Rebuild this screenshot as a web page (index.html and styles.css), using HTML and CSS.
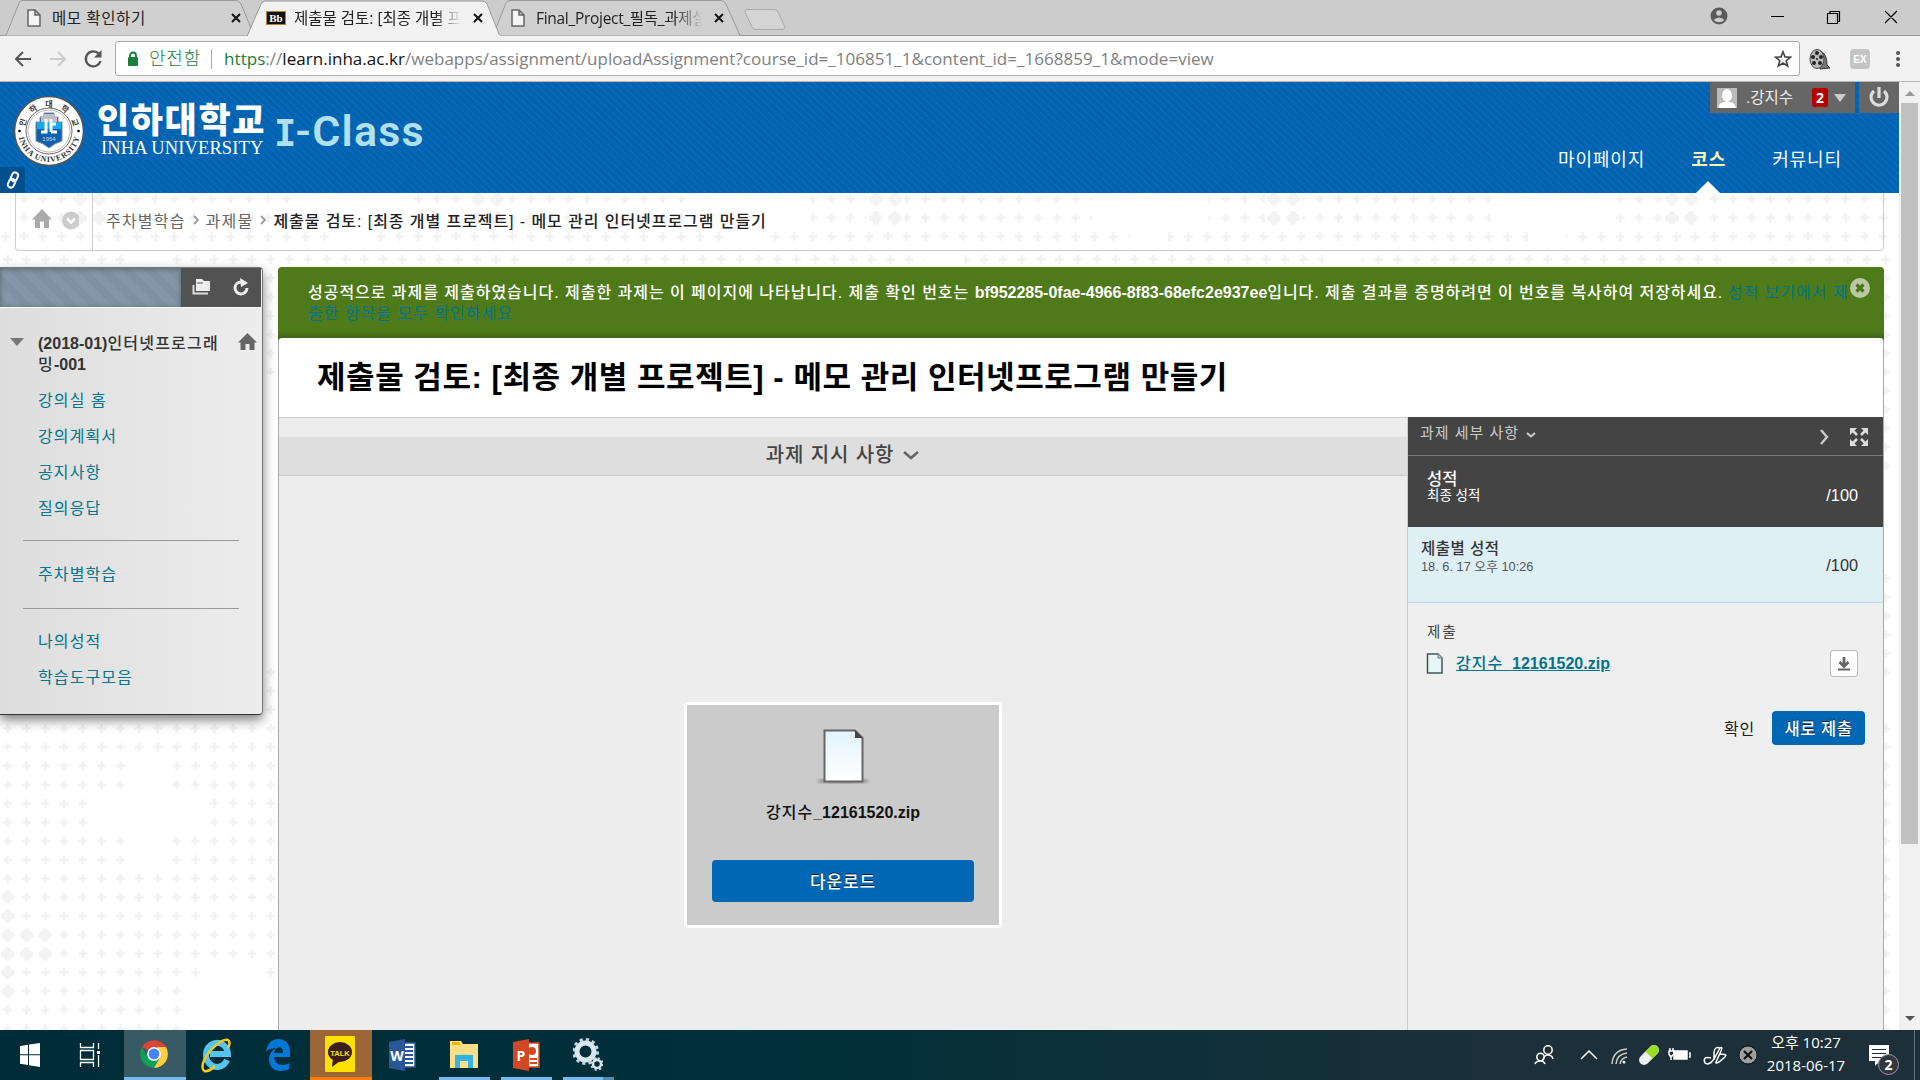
FILE: index.html
```html
<!DOCTYPE html>
<html lang="ko">
<head>
<meta charset="utf-8">
<title>제출물 검토</title>
<link rel="stylesheet" href="styles.css">
</head>
<body>
<header class="tabs">
  <svg class="tab-shapes" width="1920" height="36" viewBox="0 0 1920 36">
    <rect width="1920" height="36" fill="#ccc"/>
    <path d="M0 35.5H1920" stroke="#999" />
    <path d="M6 35.500L19 3Q20 .5 23 .5H236Q239 .5 241 4L254 35.500" fill="#d0d0d0" stroke="#999"/>
    <path d="M493 35.500L506 3Q507 .5 510 .5H721Q724 .5 726 4L740 35.500" fill="#d0d0d0" stroke="#999"/>
    <path d="M247 36.500L261 4Q262 1 265 1H482Q485 1 487 4L500 36.500" fill="#f2f2f2" stroke="#999"/>
    <path d="M248 36H500" stroke="#f2f2f2" stroke-width="2"/>
    <path d="M747 9.500H774Q777 9.500 778 12L785 27Q785 29.500 783 29.500H756Q753 29.500 752 27L745 12Q744.500 9.500 747 9.500Z" fill="#d4d4d4" stroke="#aaa"/>
  </svg>
  <div class="tab t1"><svg width="14" height="18" viewBox="0 0 14 18"><path d="M1 1H8L13 6V17H1ZM8 1V6H13" fill="#f4f4f4" stroke="#666" stroke-width="1.500"/></svg><span>메모 확인하기</span><svg class="x" width="10" height="10"><path d="M1 1L9 9M9 1L1 9" stroke="#111" stroke-width="2"/></svg></div>
  <div class="tab t2"><b class="bb">Bb</b><span>제출물 검토: [최종 개별 프</span><svg class="x" width="10" height="10"><path d="M1 1L9 9M9 1L1 9" stroke="#111" stroke-width="2"/></svg></div>
  <div class="tab t3"><svg width="14" height="18" viewBox="0 0 14 18"><path d="M1 1H8L13 6V17H1ZM8 1V6H13" fill="#f4f4f4" stroke="#666" stroke-width="1.500"/></svg><span>Final_Project_필독_과제설</span><svg class="x" width="10" height="10"><path d="M1 1L9 9M9 1L1 9" stroke="#111" stroke-width="2"/></svg></div>
  <svg class="winctl" width="210" height="34" viewBox="0 0 210 34">
    <circle cx="19" cy="15" r="8.500" fill="#5a5a5a"/><circle cx="19" cy="12" r="2.800" fill="#ccc"/><path d="M13.500 19Q19 14 24.500 19Q19 23.500 13.500 19Z" fill="#ccc"/>
    <path d="M71 15.500H84M127.500 12.500H137.500V22.500H127.500ZM130 12V10.500H139.500V20.500H138M185 10L197 22M197 10L185 22" fill="none" stroke="#000" stroke-width="1.200"/>
  </svg>
</header>
<div class="toolbar">
  <svg class="nav" width="108" height="30" viewBox="7 0 108 30">
    <path d="M31 15H16M23 8L16 15L23 22" fill="none" stroke="#555" stroke-width="2"/>
    <path d="M50 15H65M58 8L65 15L58 22" fill="none" stroke="#ccc" stroke-width="2"/>
    <path d="M99 10A7.500 7.500 0 1 0 100.500 17" fill="none" stroke="#555" stroke-width="2.300"/><path d="M101.500 6V13.500H94Z" fill="#555"/>
  </svg>
  <div class="omnibox">
    <svg width="12" height="16" viewBox="0 0 12 16"><path d="M3 7V4.500A3 3 0 0 1 9 4.500V7" fill="none" stroke="#0b8043" stroke-width="1.800"/><rect x="1" y="6" width="10" height="9" rx="1" fill="#188038"/></svg>
    <span class="secure">안전함</span><i class="sep"></i>
    <span class="url"><em>https</em>://<b>learn.inha.ac.kr</b>/webapps/assignment/uploadAssignment?course_id=_106851_1&amp;content_id=_1668859_1&amp;mode=view</span>
    <svg class="star" width="18" height="18" viewBox="0 0 18 18"><path d="M9 1.800L11 6.900L16.500 7.200L12.200 10.700L13.700 16L9 13L4.300 16L5.800 10.700L1.500 7.200L7 6.900Z" fill="none" stroke="#444" stroke-width="1.600"/></svg>
  </div>
  <svg class="ext" width="110" height="30" viewBox="0 0 110 30">
    <path d="M20 7Q27 9 27 21L30 24L20 25Z" fill="#777" stroke="#333"/><ellipse cx="17" cy="15" rx="7" ry="9.500" fill="#bbb" stroke="#444"/><g fill="#222"><circle cx="17" cy="9" r="2"/><circle cx="13" cy="13" r="2"/><circle cx="21" cy="13" r="2"/><circle cx="14" cy="19" r="2"/><circle cx="20" cy="19" r="2"/><circle cx="17" cy="15" r="1"/></g>
    <rect x="50" y="5" width="20" height="20" rx="4" fill="#c4c4c4"/><text x="60" y="18.500" text-anchor="middle" class="extx">EX</text>
    <circle cx="98" cy="9" r="2" fill="#555"/><circle cx="98" cy="15" r="2" fill="#555"/><circle cx="98" cy="21" r="2" fill="#555"/>
  </svg>
</div>
<div class="viewport">
 <div class="page">
  <svg class="dots" width="1899" height="948" viewBox="0 82 1899 948">
    <defs>
      <path id="p" d="M-4.500 0H4.500M0-4.500V4.500" stroke="#f2f2f2" stroke-width="2.600"/>
      <path id="d" d="M-3-3Q-3-6.500 0-6.500T3-3Q6.500-3 6.500 0T3 3Q3 6.500 0 6.500T-3 3Q-6.500 3-6.500 0T-3-3Z" fill="#f3f3f3" stroke="#f3f3f3"/>
      <pattern id="g" x="-1.700" y="719.100" width="18.780" height="18.760" patternUnits="userSpaceOnUse"><use href="#p" x="9.400" y="9.400"/></pattern>
      <pattern id="g2" x="14.600" y="189.600" width="18.780" height="18.760" patternUnits="userSpaceOnUse"><use href="#p" x="9.400" y="9.400"/></pattern>
      <pattern id="gaps" x="0" y="193" width="398" height="80" patternUnits="userSpaceOnUse"><rect x="297" width="116" height="35" fill="#fff"/><rect x="0" width="14" height="35" fill="#fff"/><rect x="334" y="35" width="38" height="20" fill="#fff"/><rect x="71" width="37" height="35" fill="#fff"/><use href="#d" x="80" y="6"/><use href="#d" x="99" y="6"/><use href="#d" x="80" y="25"/><use href="#d" x="99" y="25"/></pattern>
      <pattern id="gap3" x="0" y="248" width="398" height="20" patternUnits="userSpaceOnUse"><rect x="129" width="39" height="20" fill="#fff"/></pattern>
    </defs>
    <rect y="248" width="1899" height="782" fill="url(#g)"/><rect y="248" width="1899" height="20" fill="url(#gap3)"/>
    <rect y="193" width="1899" height="55" fill="url(#g2)"/><rect y="193" width="1899" height="55" fill="url(#gaps)"/>
    <path d="M130 757H168V795H205V832H168V870H130V832H92V795H130ZM205 964H262V983H280V1030H187V983H205ZM262 375H276V660H262ZM1875 475H1899V565H1875ZM1875 678H1899V716H1875Z" fill="#fff"/>
    <path d="M0 888H17V925H55V963H17V1001H0Z" fill="#fff"/>
    <use href="#d" x="7.700" y="897"/><use href="#d" x="7.700" y="916"/><use href="#d" x="7.700" y="935"/><use href="#d" x="26.500" y="935"/><use href="#d" x="45.200" y="935"/><use href="#d" x="7.700" y="954"/><use href="#d" x="26.500" y="954"/><use href="#d" x="45.200" y="954"/><use href="#d" x="7.700" y="972.500"/><use href="#d" x="7.700" y="991.500"/>
  </svg>
  <div class="banner">
    <div class="logo">
      <svg width="72" height="72" viewBox="0 0 72 72">
        <defs><path id="arcT" d="M11.500 36A24.500 24.500 0 0 1 60.500 36"/><path id="arcB" d="M5 36A31 31 0 0 0 67 36"/></defs>
        <circle cx="36" cy="36" r="34.500" fill="#fff" stroke="#555" stroke-width="1.500"/><circle cx="36" cy="36" r="23" fill="none" stroke="#666"/><circle cx="36" cy="36" r="21" fill="#fff" stroke="#bbb"/>
        <text class="seal"><textPath href="#arcT" startOffset="50%" text-anchor="middle" textLength="68">인하대학교</textPath></text>
        <text class="seal en"><textPath href="#arcB" startOffset="50%" text-anchor="middle" textLength="84">INHA UNIVERSITY</textPath></text>
        <path d="M31 18H41V22H45V27H49V46Q42 48 36 53Q30 48 23 46V27H27V22H31Z" fill="#0b62b0" stroke="#889"/><path d="M24 27H48V34H24Z" fill="#18a9e8"/><path d="M31 19H41V22H44V27H28V22H31Z" fill="#b9c0c5"/>
        <path d="M28 37H33V24M38 24V37M38 29H43M38 37H44" fill="none" stroke="#fff" stroke-width="3"/><text x="36" y="46" text-anchor="middle" class="yr">1954</text>
        <circle cx="6.500" cy="36" r="1.300"/><circle cx="65.500" cy="36" r="1.300"/>
      </svg>
      <div class="univ"><b>인하대학교</b><span>INHA UNIVERSITY</span></div>
      <div class="iclass"><i>I</i>-Class</div>
    </div>
    <div class="quick"><svg width="14" height="18" viewBox="0 0 14 18"><g fill="none" stroke="#fff" stroke-width="2" transform="rotate(25 7 9)"><rect x="4" y="1" width="6" height="9" rx="3"/><rect x="4" y="8" width="6" height="9" rx="3"/></g></svg></div>
    <div class="user">
      <div class="who"><svg width="20" height="20" viewBox="0 0 20 20"><rect width="20" height="20" fill="#bbb"/><ellipse cx="10" cy="7.500" rx="5" ry="6.500" fill="#fff"/><path d="M1 20Q2 14 8 14H12Q18 14 19 20Z" fill="#fff"/></svg><span>.강지수</span><b>2</b><i></i></div>
      <div class="power"><svg width="22" height="22" viewBox="0 0 22 22"><path d="M6 5A8 8 0 1 0 16 5M11 1V12" fill="none" stroke="#ddd" stroke-width="3.200"/></svg></div>
    </div>
    <nav class="menu"><a>마이페이지</a><a class="on">코스</a><a>커뮤니티</a></nav>
  </div>
  <div class="crumbs">
    <div class="home"><svg width="48" height="24" viewBox="0 0 48 24"><path d="M11 2L21 12.500H18V21H13V14.500H9V21H4V12.500H1Z" fill="#aaa"/><circle cx="40" cy="13.500" r="9" fill="#ccc"/><path d="M36 11.500L40 15.500L44 11.500" fill="none" stroke="#fff" stroke-width="2.500"/></svg></div>
    <div class="path"><span>주차별학습</span><svg width="6" height="10"><path d="M1 1L5 5L1 9" fill="none" stroke="#999" stroke-width="1.800"/></svg><span>과제물</span><svg width="6" height="10"><path d="M1 1L5 5L1 9" fill="none" stroke="#999" stroke-width="1.800"/></svg><b>제출물 검토: [최종 개별 프로젝트] - 메모 관리 인터넷프로그램 만들기</b></div>
  </div>
  <div class="cols">
    <aside class="side">
      <div class="sidebar-top"><i></i><svg width="80" height="40" viewBox="0 1 80 40"><rect y="1" width="80" height="40" fill="#525252"/><path d="M15 12H21L23 14H29V24H15Z" fill="#eee"/><path d="M12.500 18V26.500H27" fill="none" stroke="#ddd" stroke-width="2"/><path d="M16 16H22" stroke="#525252"/><path d="M61 15A6 6 0 1 0 66 21" fill="none" stroke="#eee" stroke-width="3"/><path d="M59 11L67 16L60 20Z" fill="#eee"/></svg></div>
      <div class="course"><i class="tri"></i><b>(2018-01)<em>인터넷프로그래<br>밍</em>-001</b><svg width="19" height="18" viewBox="0 0 19 18"><path d="M9.500 0L19 9.500H16.500V17H11.500V11H7.500V17H2.500V9.500H0Z" fill="#666"/></svg></div>
      <ul><li>강의실 홈</li><li>강의계획서</li><li>공지사항</li><li>질의응답</li></ul>
      <hr><ul class="one"><li>주차별학습</li></ul><hr>
      <ul class="last"><li>나의성적</li><li>학습도구모음</li></ul>
    </aside>
    <main class="main">
      <div class="notice"><p><span class="n1">성공적으로 과제를 제출하였습니다. 제출한 과제는 이 페이지에 나타납니다. 제출 확인 번호는 </span><strong>bf952285-0fae-4966-8f83-68efc2e937ee</strong><span class="n2">입니다. 제출 결과를 증명하려면 이 번호를 복사하여 저장하세요.</span> <a>성적 보기에서 제</a></p><p><a>출한 항목을 모두 확인하세요</a></p>
        <svg class="close" width="20" height="20" viewBox="0 0 20 20"><circle cx="10" cy="10" r="10" fill="#b9c9a3"/><path d="M6.500 6.500L13.500 13.500M13.500 6.500L6.500 13.500" stroke="#4f7518" stroke-width="3.200"/></svg></div>
      <div class="title"><h1>제출물 검토: [최종 개별 프로젝트] - 메모 관리 인터넷프로그램 만들기</h1></div>
      <div class="work">
        <section class="preview">
          <div class="instr"><b>과제 지시 사항</b><svg width="18" height="12"><path d="M2 3L9 9L16 3" fill="none" stroke="#666" stroke-width="2.500"/></svg></div>
          <div class="card">
            <svg width="56" height="58" viewBox="0 0 56 58"><defs><linearGradient id="pg" x2="0" y2="1"><stop stop-color="#e3f3fd"/><stop offset="1" stop-color="#fff"/></linearGradient><filter id="bl"><feGaussianBlur stdDeviation="1.500"/></filter></defs><ellipse cx="28" cy="54" rx="26" ry="2.500" fill="#888" filter="url(#bl)"/><path d="M9.500 3.500H40L47.500 11V54.500H9.500Z" fill="url(#pg)" stroke="#666" stroke-width="2"/><path d="M40 3V11H48Z" fill="#444"/></svg>
            <div class="fname"><span>강지수</span>_12161520.zip</div>
            <button class="dl">다운로드</button>
          </div>
        </section>
        <section class="details">
          <div class="dhead"><span>과제 세부 사항</span><svg width="12" height="8"><path d="M2 2L6 5.500L10 2" fill="none" stroke="#ccc" stroke-width="2"/></svg><svg class="dicons" width="52" height="22" viewBox="0 0 52 22"><path d="M4 4L10 11L4 18" fill="none" stroke="#ccc" stroke-width="2.300"/><g fill="#ddd"><path d="M33 2H40L33 9ZM51 2V9L44 2ZM33 20V13L40 20ZM51 20H44L51 13Z"/></g><path d="M35 4L40 9M49 4L44 9M35 18L40 13M49 18L44 13" stroke="#ddd" stroke-width="2.500"/></svg></div>
          <div class="final"><div><b>성적</b><small>최종 성적</small></div><span>/100</span></div>
          <div class="attempt"><div><b>제출별 성적</b><small>18. 6. 17 오후 10:26</small></div><span>/100</span></div>
          <div class="sub">제출</div>
          <div class="file"><svg width="18" height="21" viewBox="0 0 18 21"><path d="M1.500 1H12L16 5V20H1.500Z" fill="#e6f5f5" stroke="#455" stroke-width="1.500"/><path d="M12 1V5H16" fill="#ccc" stroke="#677"/></svg><a><span>강지수</span>_12161520.zip</a><div class="get"><svg width="12" height="14"><path d="M6 0V8M1.500 5L6 9.500L10.500 5" fill="none" stroke="#666" stroke-width="2.800"/><path d="M0 12.500H12" stroke="#666" stroke-width="2"/></svg></div></div>
          <div class="actions"><span>확인</span><button>새로 제출</button></div>
        </section>
      </div>
    </main>
  </div>
 </div>
 <div class="scroll"><i class="up"></i><i class="thumb"></i><i class="down"></i></div>
</div>
<footer class="taskbar">
  <div class="slot"><svg width="22" height="26" viewBox="0 0 22 26"><path d="M1 4L9 2.800V12.300H1ZM10 2.600L21 1V12.300H10ZM1 13.300H9V23L1 21.800ZM10 13.300H21V25L10 23.300Z" fill="#fff"/></svg></div>
  <div class="slot view"><svg width="22" height="24" viewBox="0 0 22 24"><path d="M1.500 0V4.500H14.500V0M1.500 24V19.500H14.500V24M1.500 7.500H14.500V16.500H1.500ZM19.500 0V6M19.500 12V24" fill="none" stroke="#fff" stroke-width="1.300"/><path d="M18 8H21V11H18Z" fill="#fff"/></svg></div>
  <div class="slot chrome"><svg width="30" height="34" viewBox="-15 -17 30 34"><path d="M0 0L-12 -7A14 14 0 0 1 12 -7H0Z" fill="#db4437"/><path d="M-12-7A14 14 0 0 0 0 14L6 3.500L-6 3.500Z" fill="#0f9d58"/><path d="M12-7A14 14 0 0 1 0 14L6 3.500L3-7Z" fill="#ffcd40"/><circle r="6.900" fill="#fff"/><circle r="5.400" fill="#4285f4"/></svg></div>
  <div class="slot"><svg width="30" height="36" viewBox="0 0 30 36"><path d="M26 23A11 12 0 1 1 27 17H9" fill="none" stroke="#54c5f2" stroke-width="6"/><path d="M3 34Q-2 28 9 14Q21 1 27 3Q30 5 27 11M3 34Q8 35 14 29" fill="none" stroke="#f8c81c" stroke-width="2.500"/></svg></div>
  <div class="slot"><svg width="26" height="34" viewBox="0 0 26 34"><path d="M1 14Q3 1 14 1Q25 2 25 15V19H9Q10 27 18 27Q21 27 24 25V31Q20 33 15 33Q4 32 4 21Q4 14 11 10Q4 10 1 14ZM9 15H18Q18 9 14 9Q10 10 9 15Z" fill="#0078d7"/></svg></div>
  <div class="slot talk"><svg width="30" height="36" viewBox="0 0 30 36"><rect width="30" height="36" rx="1" fill="#fae100"/><ellipse cx="15" cy="16" rx="12" ry="10" fill="#3a1d1d"/><path d="M8 22L7 31L15 25Z" fill="#3a1d1d"/><text x="15" y="19.500" text-anchor="middle" class="tk">TALK</text></svg></div>
  <div class="slot"><svg width="28" height="34" viewBox="0 0 28 34"><path d="M14 5H27V29H14Z" fill="#fff" stroke="#2b579a" stroke-width="1.500"/><path d="M17 9H25M17 13H25M17 17H25M17 21H25M17 25H25" stroke="#2b579a" stroke-width="2"/><path d="M1 4L17 1V33L1 30Z" fill="#2b579a"/><text x="9" y="22.500" text-anchor="middle" class="of">W</text></svg></div>
  <div class="slot run"><svg width="28" height="32" viewBox="0 0 28 32"><path d="M0 2H11L13 5H28V29H0Z" fill="#ffe088"/><path d="M2 3H10V6H2Z" fill="#f7b700"/><path d="M5 29V16H23V29H18V22H10V29Z" fill="#35b1e5"/></svg></div>
  <div class="slot run"><svg width="28" height="34" viewBox="0 0 28 34"><path d="M14 5H27V29H14Z" fill="#fff" stroke="#d24726" stroke-width="1.500"/><path d="M18 21H25M18 25H25" stroke="#d24726" stroke-width="2"/><circle cx="20" cy="13" r="4" fill="#d24726"/><path d="M1 4L17 1V33L1 30Z" fill="#d24726"/><text x="9" y="22.500" text-anchor="middle" class="of">P</text></svg></div>
  <div class="slot run two"><svg width="30" height="36" viewBox="0 0 30 36"><circle cx="12.500" cy="14.500" r="8.500" fill="none" stroke="#dbe6f1" stroke-width="5"/><circle cx="12.500" cy="14.500" r="12" fill="none" stroke="#c5d5e5" stroke-width="3" stroke-dasharray="3.200 3.080"/><circle cx="24" cy="27" r="4" fill="none" stroke="#dbe6f1" stroke-width="2.500"/><circle cx="24" cy="27" r="5.800" fill="none" stroke="#c5d5e5" stroke-width="2" stroke-dasharray="2.200 2.350"/></svg></div>
  <div class="tray">
    <svg width="236" height="50" viewBox="0 0 236 50"><g fill="none" stroke="#fff" stroke-width="1.500">
      <circle cx="17" cy="20" r="4.200"/><path d="M12 30Q13 25 17 25Q21 25 22 29"/><circle cx="9.500" cy="27" r="3.700"/><path d="M4 34Q5 31 9.500 31Q13 31 14 34"/>
      <path d="M50 29L58 21L66 29"/><path d="M81 34Q82 20 96 19M85 34Q86 24 96 23M89 34Q90 28 96 27" stroke="#ccc"/>
      <path d="M143 21H156V29H143Z" fill="#fff"/><path d="M158 23H159V27H158M139 18V21M142 18V21M138 21H143V24L141 26H139L138 24ZM140 26V30"/>
      <path d="M180 28Q171 26 174 33Q178 36 183 29L189 18Q192 16 190 21L185 32Q184 34 188 32L194 27M189 18Q184 16 183 22V30M194 27Q197 24 189 24"/></g>
      <circle cx="93" cy="32" r="1.500" fill="#fff"/><g transform="rotate(-45 118 25)"><rect x="106" y="20" width="24" height="10" rx="5" fill="#eee"/><path d="M118 20H125A5 5 0 0 1 125 30H118Z" fill="#9bdc28"/></g>
      <circle cx="217" cy="25" r="9" fill="#9a9fa2" stroke="#111"/><path d="M213 21L221 29M221 21L213 29" stroke="#111" stroke-width="2.200"/></svg>
    <div class="clock"><span>오후 10:27</span><span>2018-06-17</span></div>
    <svg width="54" height="50" viewBox="0 0 54 50"><path d="M3 15H23V31H14L9 36V31H3Z" fill="#fff"/><path d="M6 19.500H20M6 23.500H20M6 27.500H16" stroke="#1d3039"/><circle cx="22.500" cy="34.500" r="10" fill="#30383c" stroke="#99a"/><text x="22.500" y="39.500" text-anchor="middle" class="badge">2</text><path d="M48.500 0V50" stroke="#62717a"/></svg>
  </div>
</footer>
</body>
</html>
```
FILE: styles.css
```css
*{box-sizing:border-box}
body{margin:0;width:1920px;height:1080px;overflow:hidden;display:flex;flex-direction:column;font-family:"Liberation Sans","Noto Sans CJK KR",sans-serif;font-size:16px;color:#333}
svg{display:block;flex:none}
p,h1,ul{margin:0;padding:0}
em{font-style:normal}
button{font-family:inherit;border:0;padding:0}
.tabs{position:relative;height:36px;display:flex;align-items:center;font-family:"Open Sans","Noto Sans CJK KR",sans-serif;font-size:15.500px;color:#222;background:#ccc}
.tab-shapes,.dots{position:absolute;left:0;top:0}
.tab{position:relative;display:flex;align-items:center;height:36px;gap:11px;white-space:nowrap}
.tab span{flex:1;overflow:hidden;line-height:24px}
.t1{margin-left:27px;width:214px}
.t1 span{letter-spacing:.6px}
.t2{margin-left:25px;width:217px;gap:8px}
.t3{margin-left:28px;width:213px;letter-spacing:-.3px}
.t2 span{-webkit-mask-image:linear-gradient(90deg,#000 82%,transparent 98%)}
.t3 span{-webkit-mask-image:linear-gradient(90deg,#000 82%,transparent)}
.bb{width:20px;height:14px;background:#111;border:1px solid #a98531;color:#fff;font:bold 11px/12px "Liberation Serif",serif;text-align:center}
.winctl{position:relative;margin-left:auto;margin-right:10px}
.toolbar{height:46px;background:#f2f2f2;border-bottom:1px solid #b5b5b5;display:flex;align-items:center;padding-left:7px}
.omnibox{height:35px;width:1685px;border:1px solid #aaa;border-radius:3px;background:#fff;display:flex;align-items:center;padding:0 7px 0 11px;font-family:"Open Sans","Noto Sans CJK KR",sans-serif;font-size:17px}
.secure{color:#188038;font-size:18px;margin-left:10px;line-height:26px;letter-spacing:.8px;font-weight:300;height:28px}
.sep{width:1px;height:20px;background:#aaa;margin:0 12px 0 10px}
.url{color:#808080;flex:1;white-space:nowrap;letter-spacing:.03px}
.url em{color:#188038}.url b{font-weight:400;color:#111}
.extx{font:bold 10px "Liberation Sans",sans-serif;fill:#fff}
.viewport{height:948px;display:flex}
.page{position:relative;width:1899px;height:948px;overflow:hidden;background:#fff}
.banner{position:relative;height:111px;background:repeating-linear-gradient(43deg,#0064b3 0 4.200px,#116cb7 4.700px 5.300px)}
.logo{display:flex;padding:13px 0 0 13px}
.univ{display:flex;flex-direction:column;color:#fff;margin-left:12px;width:168px}
.univ b{font:900 35px/42px "Noto Sans CJK KR",sans-serif;letter-spacing:1.600px;margin-top:2px;white-space:nowrap}
.univ span{font:18.500px/20px "Liberation Serif",serif;margin:-1px 0 0 4px;white-space:nowrap;letter-spacing:.1px}
.iclass{font:600 43px/60px Roboto,sans-serif;color:#b2e0ee;letter-spacing:1.200px;margin:6px 0 0 9px;white-space:nowrap}
.iclass i{font:700 37px/60px "DejaVu Sans Mono",monospace;letter-spacing:-1px}
.seal{font:bold 8px "Noto Sans CJK KR",sans-serif;fill:#333}
.seal.en{font:bold 8px "Liberation Serif",serif}
.yr{font:6px "Liberation Sans",sans-serif;fill:#cde}
.quick{position:absolute;left:0;bottom:0;width:25px;height:26px;background:#00508f;display:flex;align-items:center;justify-content:center;border-radius:0 3px 0 0}
.user{position:absolute;right:0;top:0;display:flex;gap:4px}
.who{width:145px;height:31px;background:#666;display:flex;align-items:center;padding-left:7px;color:#eee;font-size:15.500px}
.who span{margin-left:9px;width:66px;white-space:nowrap;line-height:24px;padding-left:0}
.who b{background:#b80000;color:#fff;width:16px;height:19px;border-radius:2px;font:bold 14px/19px "Noto Sans",sans-serif;text-align:center}
.who i,.tri{border:6px solid transparent;border-top:8px solid #ccc;border-bottom:0;margin-left:6px}
.power{width:40px;height:31px;background:#666;display:flex;align-items:center;justify-content:center;padding:0 1px 2px 0}
.menu{position:absolute;right:57px;top:63px;display:flex;gap:46px;color:#fff;font-size:18px;line-height:30px;letter-spacing:.9px}
.menu .on{position:relative;color:#fff3b0;font-weight:700}
.on::after{content:"";position:absolute;left:5px;top:36px;border:12px solid transparent;border-bottom-color:#fff;border-top:0}
.crumbs{position:relative;margin:0 15px;height:58px;border:1px solid #ccc;border-top:0;border-radius:0 0 4px 4px;display:flex}
.home{width:77px;border-right:1px solid #ccc;padding:14px 0 0 15px}
.path{display:flex;align-items:center;gap:7px;padding:0 0 5px 13px;height:58px;font-size:16px;color:#666;white-space:nowrap;letter-spacing:1.200px}
.path b{font-weight:500;color:#222;letter-spacing:.93px}
.cols{position:relative;display:flex;align-items:flex-start;gap:15px;margin-top:16px}
.side{width:263px;height:448px;border:1px solid #777;border-left:0;border-bottom:1px solid #333;border-radius:0 4px 4px 0;background:linear-gradient(90deg,#ddd,#ededed);box-shadow:0 5px 12px rgba(0,0,0,.5);color:#00748b}
.sidebar-top{display:flex;height:40px;border-bottom:1px solid #fff;overflow:hidden;padding-right:1px}
.sidebar-top i{flex:1;background:repeating-linear-gradient(45deg,#7d91a3 0 8px,#8496a7 8px 16px);box-shadow:inset 0 1px 5px #566}
.course{display:flex;margin-top:25px;height:43px;color:#333;font-size:16px;line-height:21px}
.course .tri{margin:5px 14px 0 10px;border-width:8px 7px 0;border-top-color:#777}
.course b{width:200px;white-space:nowrap}.course em{font-weight:500;letter-spacing:1.200px}
.course svg{margin-top:0}
.side li{list-style:none;font-size:16px;height:36px;line-height:36px;margin-left:38px;letter-spacing:1.100px}
.side ul{height:155px;padding-top:7px}
.side hr{border:0;border-top:1px solid #999;margin:9px 23px 0 23px;width:216px}
.side .one{height:58px;padding-top:16px}
.side .last{padding-top:15px}
.main{width:1606px;height:763px;background:#4f7a1a;border-radius:4px 4px 0 0;font-size:16px}
.notice{position:relative;height:71px;padding:15px 0 0 30px;color:#fff;line-height:21px;white-space:nowrap;box-shadow:inset 0 -6px 6px -4px rgba(0,0,0,.25);border-radius:4px 4px 0 0}
.notice span{font-weight:500}
.notice .n1{letter-spacing:.97px}.notice .n2{letter-spacing:.95px}
.notice a{color:#00748b;letter-spacing:1px}
.close{position:absolute;right:14px;top:11px}
.title{height:79px;background:#fff;border:1px solid #aaa;border-width:0 1px;border-radius:4px 4px 0 0;padding:17px 0 0 38px}
h1{font-size:31px;line-height:46px;color:#000;white-space:nowrap;letter-spacing:.55px}
.work{display:flex;height:613px;border:1px solid #aaa;border-width:0 1px}
.preview{width:1129px;background:#ededed;border-top:1px solid #ccc;border-right:1px solid #ccc}
.instr{margin-top:19px;height:39px;background:#dedede;border-bottom:1px solid #ccc;display:flex;align-items:center;justify-content:center;gap:8px;font-size:20px;color:#444;padding-bottom:5px}
.instr b{font-weight:500;letter-spacing:.9px}
.instr svg{margin-top:3px}
.card{width:318px;height:226px;background:#cbcbcb;border:3px solid #fff;border-radius:4px;margin:226px 0 0 405px;display:flex;flex-direction:column;align-items:center;padding-top:22px}
.fname{font-weight:700;color:#111;margin-top:16px;line-height:24px;height:59px}
.fname span,.file a span{font-weight:500;letter-spacing:1px}
.dl{width:262px;height:42px;flex:none;background:#0067b5;color:#fff;border-radius:4px;font-size:17px;font-weight:500;text-shadow:0 -1px #00213e;letter-spacing:.9px;padding-bottom:2px}
.details{width:475px;background:#efefef}
.dhead{height:39px;background:#444;border-bottom:1px solid #777;display:flex;align-items:flex-start;color:#ccc;padding:5px 14px 0 12px;font-size:15px;line-height:22px;letter-spacing:1px}
.dhead svg{margin:9px 0 0 6px}.dhead .dicons{margin:4px 0 0 auto}
.final,.attempt{display:flex;justify-content:space-between;font-size:16.300px}
.final b,.attempt b,.final small,.attempt small{display:block;font-weight:500;line-height:18px}
.final{height:71px;background:#444;color:#fff;padding:14px 25px 0 19px}
.final b{font-size:16.500px}.final small{font-size:13.500px;line-height:16px;font-weight:400}
.final span{margin-top:16px}
.attempt{height:76px;background:#dff0f5;border-bottom:1px solid #b5dde9;color:#333;padding:12px 25px 0 13px}
.attempt b{font-size:15.500px;letter-spacing:.5px;line-height:19px}.attempt small{font-size:12.800px;font-weight:400;color:#555}
.attempt span{margin-top:17px}
.sub{padding:18px 0 0 19px;font-size:14.500px;line-height:22px;letter-spacing:1.800px;color:#444}
.file{display:flex;align-items:center;padding:7px 25px 0 18px}
.file a{color:#00748b;font-weight:700;text-decoration:underline;margin-left:12px;line-height:24px}
.get{margin-left:auto;width:28px;height:27px;background:#fff;border:1px solid #bbb;border-radius:3px;display:flex;align-items:center;justify-content:center}
.actions{display:flex;justify-content:flex-end;align-items:center;gap:17px;padding:34px 18px 0 0;color:#222;letter-spacing:.8px}
.actions button{width:93px;height:34px;border-radius:4px;background:#0067b5;color:#fff;font-size:16.500px;font-weight:500;text-shadow:0 -1px #00213e;letter-spacing:.5px}
.scroll{width:21px;background:#f1f1f1;display:flex;flex-direction:column;align-items:center;padding-top:9px}
.up{border:5px solid transparent;border-top:0;border-bottom-color:#999}
.thumb{width:17px;height:741px;background:#c1c1c1;margin-top:7px}
.down{border:5px solid transparent;border-bottom:0;border-top-color:#555;margin-top:172px}
.taskbar{height:50px;display:flex;background:linear-gradient(90deg,#002c38,#00303a 40%,#1d3039 80%)}
.slot{width:62px;height:50px;display:flex;align-items:center;justify-content:center;padding-right:2px}
.view{padding-right:6px}
.chrome{background:#385a65;border-bottom:3px solid #76b9ed}
.talk{background:#9c6636;border-bottom:3px solid #ff7b00}
.run{background:linear-gradient(#76b9ed,#76b9ed) 5px 47px/51px 3px no-repeat}
.two{background:linear-gradient(90deg,#76b9ed 40px,#5688b0 40px) 5px 47px/51px 3px no-repeat}
.tk{font:bold 7.500px "Liberation Sans",sans-serif;fill:#fae100}
.of{font:bold 14px "Open Sans",sans-serif;fill:#fff}
.badge{font:bold 14px "Open Sans",sans-serif;fill:#fff}
.tray{margin-left:auto;display:flex;color:#fff}
.clock{width:104px;margin:0 8px 0 -13px;text-align:center;display:flex;flex-direction:column;font:15px/23px "Open Sans","Noto Sans CJK KR",sans-serif;padding-top:1px}
```
